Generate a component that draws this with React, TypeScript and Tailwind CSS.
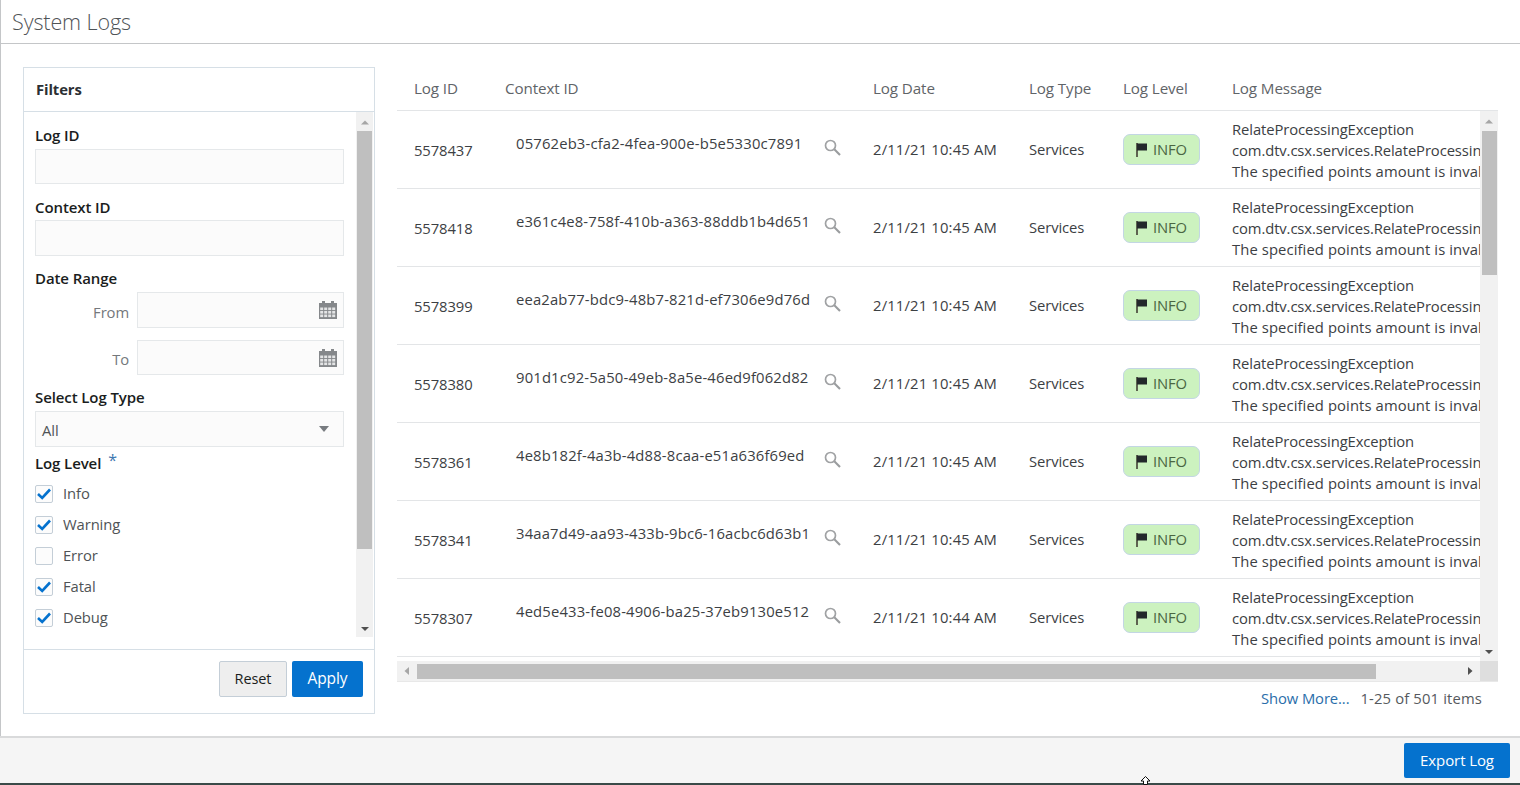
import React from "react";

const rows = [
  ["5578437", "05762eb3-cfa2-4fea-900e-b5e5330c7891", "2/11/21 10:45 AM"],
  ["5578418", "e361c4e8-758f-410b-a363-88ddb1b4d651", "2/11/21 10:45 AM"],
  ["5578399", "eea2ab77-bdc9-48b7-821d-ef7306e9d76d", "2/11/21 10:45 AM"],
  ["5578380", "901d1c92-5a50-49eb-8a5e-46ed9f062d82", "2/11/21 10:45 AM"],
  ["5578361", "4e8b182f-4a3b-4d88-8caa-e51a636f69ed", "2/11/21 10:45 AM"],
  ["5578341", "34aa7d49-aa93-433b-9bc6-16acbc6d63b1", "2/11/21 10:45 AM"],
  ["5578307", "4ed5e433-fe08-4906-ba25-37eb9130e512", "2/11/21 10:44 AM"],
];

const Tri = ({ dir, color }: { dir: "up" | "down" | "left" | "right"; color: string }) => (
  <svg width="10" height="10" viewBox="0 0 10 10" className="block">
    {dir === "up" && <path d="M1 7.5L5 3.5L9 7.5Z" fill={color} />}
    {dir === "down" && <path d="M1 3L5 7L9 3Z" fill={color} />}
    {dir === "left" && <path d="M7 1L2.5 5L7 9Z" fill={color} />}
    {dir === "right" && <path d="M3 1L7.5 5L3 9Z" fill={color} />}
  </svg>
);

const Calendar = () => (
  <svg width="18" height="18" viewBox="0 0 18 18" className="block">
    <rect x="0" y="2" width="18" height="16" fill="#85888b" />
    <rect x="3" y="0" width="3" height="4" fill="#85888b" />
    <rect x="12" y="0" width="3" height="4" fill="#85888b" />
    {[1, 5, 9, 13].map((x) =>
      [6.5, 10, 13.5].map((y) => (
        <rect key={`${x}-${y}`} x={x + 0.2} y={y} width="3" height="2.6" fill="#e4e5e6" />
      )),
    )}
  </svg>
);

const Check = () => (
  <svg width="16" height="14" viewBox="0 0 16 14" className="block">
    <path d="M2 7L6.2 11L14 2.5" fill="none" stroke="#0572ce" strokeWidth="2.6" />
  </svg>
);

const Flag = () => (
  <svg width="11" height="14" viewBox="0 0 11 14" className="block">
    <rect x="0" y="0" width="2" height="14" fill="#5d6350" />
    <rect x="1" y="0.5" width="10" height="7" fill="#23282b" />
  </svg>
);

const Magnifier = ({ className }: { className: string }) => (
  <svg width="17" height="17" viewBox="0 0 17 17" className={className}>
    <circle cx="6.5" cy="6.5" r="5" fill="none" stroke="#a0a2a4" strokeWidth="1.7" />
    <path d="M10.3 10.3L16 16" fill="none" stroke="#9a9c9e" strokeWidth="2.1" />
  </svg>
);

const Field = ({ className }: { className: string }) => (
  <div className={`border border-[#e5e8ea] bg-[#fbfbfb] ${className}`} />
);

const CheckRow = ({ label, checked }: { label: string; checked: boolean }) => (
  <div className="flex h-[31px] items-center">
    <span className="flex h-[18px] w-[18px] items-center justify-center rounded-[2px] border border-[#c4ced7] bg-[#fcfcfc]">
      {checked && <Check />}
    </span>
    <span className="ml-[10px] text-[#4f5356]">{label}</span>
  </div>
);

const Label = ({ children, className = "" }: { children: React.ReactNode; className?: string }) => (
  <div className={`text-[15px] font-semibold leading-[20px] text-[#1a1d20] ${className}`}>{children}</div>
);

const COLS = "grid grid-cols-[91px_368px_156px_94px_109px_1fr]";

export default function App() {
  return (
    <div className="relative flex h-[785px] w-[1520px] flex-col overflow-hidden bg-white font-['Open_Sans','Noto_Sans',sans-serif] text-[14.8px] tracking-[-0.1px] text-[#3c4043]">
      <header className="flex h-[44px] shrink-0 items-center border-b border-l border-b-[#c4c6c8] border-l-[#c4c6c8] pl-[11px]">
        <h1 className="text-[21.5px] font-light leading-none text-[#4f5356]">System Logs</h1>
      </header>

      <main className="flex min-h-0 flex-1 border-l border-[#c4c6c8] pl-[22px] pt-[23px]">
        {/* Filters */}
        <aside className="flex h-[647px] w-[352px] shrink-0 flex-col border border-[#d6dfe6]">
          <div className="flex h-[44px] shrink-0 items-center border-b border-[#d6dfe6] pl-[12px] font-bold text-[#2b2f33]">
            Filters
          </div>
          <div className="flex h-[525px] shrink-0">
            <div className="w-[332px] shrink-0 pl-[11px] pt-[13px]">
              <Label>Log ID</Label>
              <Field className="mt-[4px] h-[35px] w-[309px]" />
              <Label className="mt-[13px]">Context ID</Label>
              <Field className="mt-[3px] h-[36px] w-[309px]" />
              <Label className="mt-[12px]">Date Range</Label>
              <div className="mt-[4px] flex h-[36px] w-[309px]">
                <span className="w-[94px] self-center pt-[4px] text-right text-[#74787c]">From</span>
                <div className="ml-[8px] flex flex-1 items-center justify-end border border-[#e5e8ea] bg-[#fbfbfb] pr-[6px]">
                  <Calendar />
                </div>
              </div>
              <div className="mt-[12px] flex h-[35px] w-[309px]">
                <span className="w-[94px] self-center pt-[4px] text-right text-[#74787c]">To</span>
                <div className="ml-[8px] flex flex-1 items-center justify-end border border-[#e5e8ea] bg-[#fbfbfb] pr-[6px]">
                  <Calendar />
                </div>
              </div>
              <Label className="mt-[12px]">Select Log Type</Label>
              <div className="mt-[4px] flex h-[36px] w-[309px] items-center justify-between border border-[#e5e8ea] bg-[#fbfbfb] pl-[6px] pr-[13px]">
                <span className="pt-[2px] text-[#4f5356]">All</span>
                <svg width="12" height="8" viewBox="0 0 12 8" className="block">
                  <path d="M1 1H11L6 7Z" fill="#787c80" />
                </svg>
              </div>
              <div className="mt-[6px] flex h-[20px] items-center">
                <Label>Log Level</Label>
                <span className="-mt-[6px] ml-[7px] text-[16px] text-[#3f78b0]">*</span>
              </div>
              <div className="mt-[5px]">
                <CheckRow label="Info" checked />
                <CheckRow label="Warning" checked />
                <CheckRow label="Error" checked={false} />
                <CheckRow label="Fatal" checked />
                <CheckRow label="Debug" checked />
              </div>
            </div>
            <div className="flex w-[17px] shrink-0 flex-col items-center bg-[#f1f1f1]">
              <div className="flex h-[19px] items-center justify-center"><Tri dir="up" color="#a6a6a6" /></div>
              <div className="h-[418px] w-[15px] bg-[#bfbfbf]" />
              <div className="flex-1" />
              <div className="flex h-[17px] items-center justify-center"><Tri dir="down" color="#505050" /></div>
            </div>
          </div>
          <div className="mt-[12px] flex flex-1 items-start justify-end gap-[5px] border-t border-[#d6dfe6] pr-[11px] pt-[11px]">
            <button className="h-[36px] w-[68px] rounded-[2px] border border-[#c4ced7] bg-[#eeeeee] text-[14.5px] text-[#1a1d20]">Reset</button>
            <button className="h-[36px] w-[71px] rounded-[2px] bg-[#0572ce] text-[15.5px] text-white">Apply</button>
          </div>
        </aside>

        {/* Table */}
        <section className="ml-[22px] flex h-[651px] w-[1101px] shrink-0 flex-col">
          <div className={`${COLS} h-[44px] shrink-0 items-center border-b border-[#e3e5e7] pr-[19px] text-[15.2px] text-[#5f6468]`}>
            {["Log ID", "Context ID", "Log Date", "Log Type", "Log Level", "Log Message"].map((h) => (
              <div key={h} className="pb-[1px] pl-[17px]">{h}</div>
            ))}
          </div>
          <div className="flex h-[550px] shrink-0">
            <div className="min-w-0 flex-1 overflow-hidden">
              {rows.map(([id, ctx, date]) => (
                <div key={id} className={`${COLS} h-[78px] items-center border-b border-[#e3e5e7]`}>
                  <div className="pl-[17px] pt-[1px]">{id}</div>
                  <div className="relative flex items-center pl-[28px]">
                    <span className="-mt-[12px] whitespace-nowrap tracking-[0.17px]">{ctx}</span>
                    <Magnifier className="absolute left-[336px] top-[-5px] block" />
                  </div>
                  <div className="pl-[17px] tracking-[0.17px]">{date}</div>
                  <div className="pl-[17px]">Services</div>
                  <div className="pl-[17px]">
                    <div className="flex h-[31px] w-[77px] items-center justify-center gap-[6px] rounded-[7px] border border-[#c3d6e4] bg-[#ccf2bf] text-[#4a6642]">
                      <Flag />
                      <span>INFO</span>
                    </div>
                  </div>
                  <div className="overflow-hidden whitespace-nowrap pl-[17px] pt-[1px] leading-[21px]">
                    <div>RelateProcessingException</div>
                    <div>com.dtv.csx.services.RelateProcessingException</div>
                    <div className="tracking-[0.1px]">The specified points amount is invalid for this operation</div>
                  </div>
                </div>
              ))}
            </div>
            <div className="flex w-[18px] shrink-0 flex-col items-center bg-[#f1f1f1]">
              <div className="flex h-[20px] items-center justify-center"><Tri dir="up" color="#a6a6a6" /></div>
              <div className="h-[144px] w-[15px] bg-[#bfbfbf]" />
              <div className="flex-1" />
              <div className="flex h-[18px] items-center justify-center"><Tri dir="down" color="#505050" /></div>
            </div>
          </div>
          <div className="flex h-[21px] shrink-0 items-center border-b border-[#e8e8e8] bg-[#f1f1f1]">
            <div className="flex h-[20px] w-[20px] items-center justify-center"><Tri dir="left" color="#a6a6a6" /></div>
            <div className="h-[15px] w-[959px] bg-[#bfbfbf]" />
            <div className="flex-1" />
            <div className="mr-[5px]"><Tri dir="right" color="#505050" /></div>
            <div className="h-[20px] w-[18px] bg-[#dedede]" />
          </div>
          <div className="mt-[6px] flex items-center justify-end pr-[16px] leading-[20px]">
            <span className="text-[#2a6eaa]">Show More...</span>
            <span className="ml-[11px] tracking-[0.15px] text-[#55595d]">1-25 of 501 items</span>
          </div>
        </section>
      </main>

      <footer className="flex h-[47px] shrink-0 items-start justify-end border-t-2 border-[#d9dadb] bg-[#f5f5f5] pr-[10px] pt-[5px]">
        <button className="h-[35px] w-[106px] rounded-[2px] bg-[#0572ce] text-[15px] text-white">Export Log</button>
      </footer>
      <div className="h-[2px] shrink-0 bg-[#3a4a48]" />
      <svg width="11" height="10" viewBox="0 0 11 10" className="absolute left-[1140px] top-[776px]">
        <path d="M5.5 0.5L10 5H7.5V8.5H3.5V5H1Z" fill="#fff" stroke="#111" strokeWidth="1" />
      </svg>
    </div>
  );
}
